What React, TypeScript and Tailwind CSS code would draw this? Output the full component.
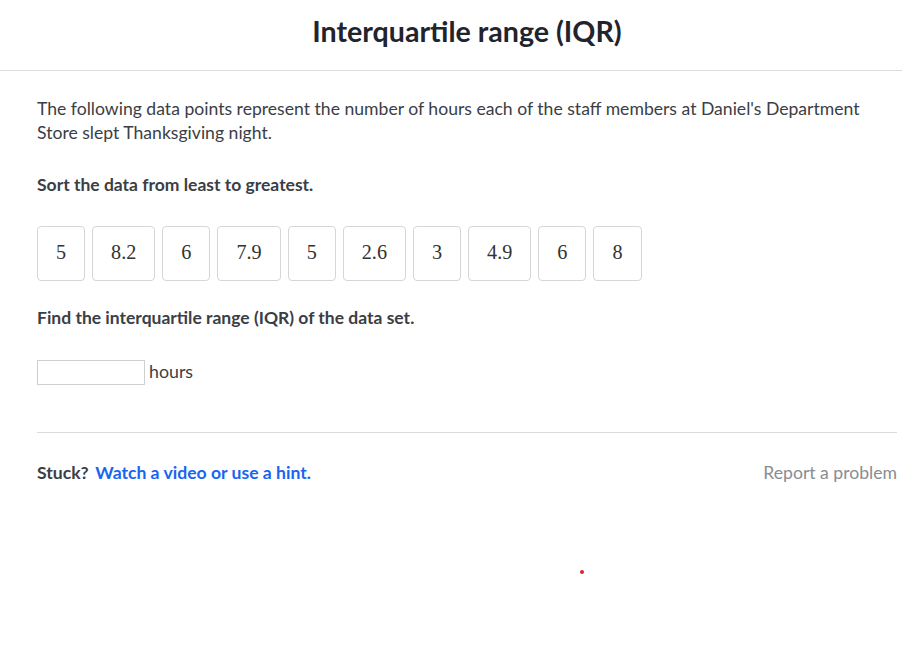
const DATA = ["5", "8.2", "6", "7.9", "5", "2.6", "3", "4.9", "6", "8"];

export default function App() {
  return (
    <div className="relative min-h-[662px] bg-white text-[#21242c] font-['Lato','Noto_Sans',sans-serif]">
      <header className="h-[71px] border-b border-[#dcdcdc] flex items-center justify-center">
        <h1 className="text-[28.6px] font-bold leading-none mb-[8px] ml-[32px]">Interquartile range (IQR)</h1>
      </header>

      <main className="pl-[37px] pr-[5px] pt-[26px]">
        <p className="text-[17.6px] leading-[24px] text-[#3b3e44]">
          The following data points represent the number of hours each of the staff members at Daniel's Department
          Store slept Thanksgiving night.
        </p>
        <p className="mt-[28px] text-[17.5px] leading-[24px] font-bold text-[#3b3e44]">
          Sort the data from least to greatest.
        </p>

        <div className="mt-[29px] flex gap-[7px]">
          {DATA.map((n, i) => (
            <div
              key={i}
              className="h-[55px] px-[18px] pb-[3px] flex items-center justify-center border border-[#d6d6d6] rounded-[4px] text-[20.2px] font-['Liberation_Serif',serif] text-[#333]"
            >
              {n}
            </div>
          ))}
        </div>

        <p className="mt-[25px] text-[17.5px] leading-[24px] font-bold text-[#3b3e44]">
          Find the interquartile range (IQR) of the data set.
        </p>

        <div className="mt-[30px] flex items-center gap-[4px]">
          <input className="w-[108px] h-[25px] border border-[#cfcfcf] outline-none" />
          <span className="text-[17.8px] text-[#3b3e44] -mt-[2px]">hours</span>
        </div>

        <div className="mt-[47px] border-t border-[#dcdcdc]" />

        <div className="mt-[28px] flex items-center justify-between text-[17.6px] leading-[24px]">
          <div>
            <span className="font-bold text-[#3b3e44]">Stuck?</span>{" "}
            <a className="font-bold text-[#1865f2] ml-[2px]">Watch a video or use a hint.</a>
          </div>
          <a className="text-[#888d93]">Report a problem</a>
        </div>
      </main>

      <div className="absolute left-[580px] top-[570px] w-[4px] h-[4px] rounded-full bg-[#d8262b]" />
    </div>
  );
}
